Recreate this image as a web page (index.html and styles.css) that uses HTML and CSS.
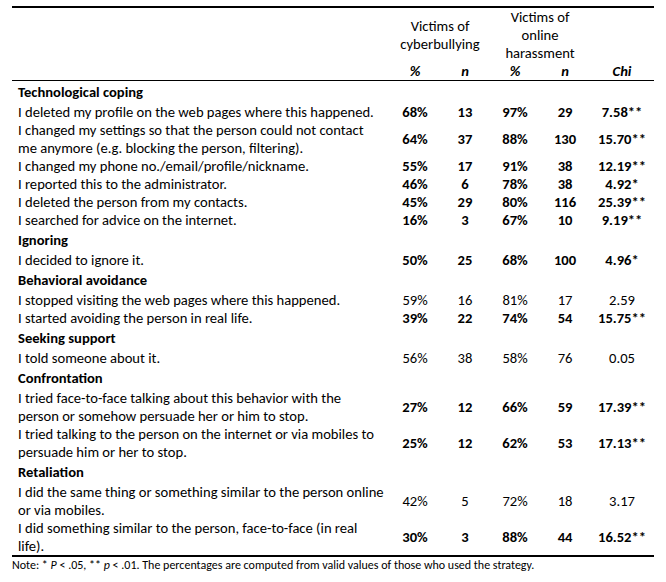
FILE: index.html
```html
<!DOCTYPE html>
<html>
<head>
<meta charset="utf-8">
<link rel="stylesheet" href="styles.css">
</head>
<body>
<div class="wrap">
<table class="tbl">
  <colgroup>
    <col class="c-label"><col class="c-num"><col class="c-num"><col class="c-num"><col class="c-num"><col class="c-chi">
  </colgroup>
  <thead>
    <tr class="h1">
      <th></th>
      <th colspan="2" class="grp">Victims of<br>cyberbullying</th>
      <th colspan="2" class="grp">Victims of<br>online<br>harassment</th>
      <th></th>
    </tr>
    <tr class="h2">
      <th></th><th>%</th><th>n</th><th>%</th><th>n</th><th>Chi</th>
    </tr>
  </thead>
  <tbody>
    <tr class="sec"><td colspan="6">Technological coping</td></tr>
    <tr class="b"><td>I deleted my profile on the web pages where this happened.</td><td>68%</td><td>13</td><td>97%</td><td>29</td><td>7.58**</td></tr>
    <tr class="b"><td>I changed my settings so that the person could not contact<br>me anymore (e.g. blocking the person, filtering).</td><td>64%</td><td>37</td><td>88%</td><td>130</td><td>15.70**</td></tr>
    <tr class="b"><td>I changed my phone no./email/profile/nickname.</td><td>55%</td><td>17</td><td>91%</td><td>38</td><td>12.19**</td></tr>
    <tr class="b"><td>I reported this to the administrator.</td><td>46%</td><td>6</td><td>78%</td><td>38</td><td>4.92*</td></tr>
    <tr class="b"><td>I deleted the person from my contacts.</td><td>45%</td><td>29</td><td>80%</td><td>116</td><td>25.39**</td></tr>
    <tr class="b"><td>I searched for advice on the internet.</td><td>16%</td><td>3</td><td>67%</td><td>10</td><td>9.19**</td></tr>
    <tr class="sec"><td colspan="6">Ignoring</td></tr>
    <tr class="b"><td>I decided to ignore it.</td><td>50%</td><td>25</td><td>68%</td><td>100</td><td>4.96*</td></tr>
    <tr class="sec"><td colspan="6">Behavioral avoidance</td></tr>
    <tr><td>I stopped visiting the web pages where this happened.</td><td>59%</td><td>16</td><td>81%</td><td>17</td><td>2.59</td></tr>
    <tr class="b"><td>I started avoiding the person in real life.</td><td>39%</td><td>22</td><td>74%</td><td>54</td><td>15.75**</td></tr>
    <tr class="sec"><td colspan="6">Seeking support</td></tr>
    <tr><td>I told someone about it.</td><td>56%</td><td>38</td><td>58%</td><td>76</td><td>0.05</td></tr>
    <tr class="sec"><td colspan="6">Confrontation</td></tr>
    <tr class="b"><td>I tried face-to-face talking about this behavior with the<br>person or somehow persuade her or him to stop.</td><td>27%</td><td>12</td><td>66%</td><td>59</td><td>17.39**</td></tr>
    <tr class="b"><td>I tried talking to the person on the internet or via mobiles to<br>persuade him or her to stop.</td><td>25%</td><td>12</td><td>62%</td><td>53</td><td>17.13**</td></tr>
    <tr class="sec"><td colspan="6">Retaliation</td></tr>
    <tr><td>I did the same thing or something similar to the person online<br>or via mobiles.</td><td>42%</td><td>5</td><td>72%</td><td>18</td><td>3.17</td></tr>
    <tr class="b"><td>I did something similar to the person, face-to-face (in real<br>life).</td><td>30%</td><td>3</td><td>88%</td><td>44</td><td>16.52**</td></tr>
  </tbody>
</table>
<p class="note">Note: * <i>P</i> &lt; .05, ** <i>p</i> &lt; .01. The percentages are computed from valid values of those who used the strategy.</p>
</div>
</body>
</html>
```
FILE: styles.css
```css
html, body {
  margin: 0;
  padding: 0;
  background: #fff;
}
body {
  font-family: Carlito, Lato, "Open Sans", sans-serif;
  color: #000;
}
.wrap {
  padding: 6px 0 0 12px;
  width: 642px;
}
.tbl {
  width: 642px;
  border-collapse: collapse;
  table-layout: fixed;
  font-size: 14.6px;
  line-height: 18px;
  border-top: 2px solid #000;
  border-bottom: 2px solid #000;
}
.c-label { width: 378px; }
.c-num { width: 50px; }
.c-chi { width: 64px; }
.tbl th, .tbl td {
  padding: 0;
  vertical-align: middle;
}
.tbl th {
  font-weight: normal;
  text-align: center;
}
.h1 th {
  height: 54px;
}
.h2 th {
  font-weight: bold;
  font-style: italic;
  height: 18px;
  border-bottom: 1px solid #000;
}
.tbl td {
  text-align: center;
}
.tbl td:first-child {
  text-align: left;
  padding: 0 0 0 6px;
  white-space: nowrap;
}
.b td {
  font-weight: bold;
}
.b td:first-child {
  font-weight: normal;
}
.sec td, .sec td:first-child {
  font-weight: bold;
  padding-top: 2px;
  padding-bottom: 2px;
}
.note {
  margin: 0;
  font-size: 12px;
  line-height: 16px;
}
```
